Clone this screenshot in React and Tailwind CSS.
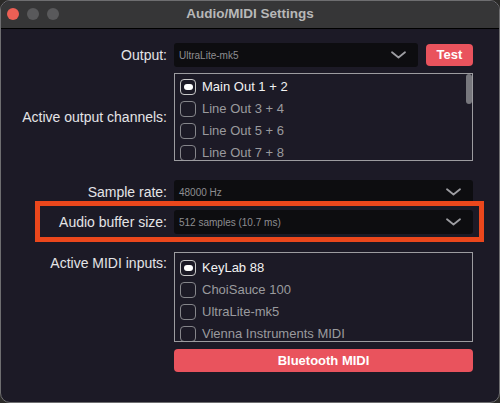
const outputs = ["Main Out 1 + 2", "Line Out 3 + 4", "Line Out 5 + 6", "Line Out 7 + 8"];
const midiInputs = ["KeyLab 88", "ChoiSauce 100", "UltraLite-mk5", "Vienna Instruments MIDI"];

function Check({ on }) {
  return (
    <div
      className={`w-4 h-4 shrink-0 rounded-[4px] border flex items-center justify-center ${
        on ? "border-[#c9c9c9]" : "border-[#85858a]"
      }`}
    >
      {on && <div className="w-[9px] h-[6px] rounded-full bg-white" />}
    </div>
  );
}

function Chevron() {
  return (
    <svg width="15" height="8" viewBox="0 0 15 8" fill="none" className="shrink-0">
      <path d="M1 1.2 L7.5 6.5 L14 1.2" stroke="#9d9da2" strokeWidth="1.8" strokeLinecap="round" strokeLinejoin="round" />
    </svg>
  );
}

function Combo({ value }) {
  return (
    <div className="h-6 flex-1 flex items-center justify-between pl-[5px] pr-[12px] rounded-[3px] bg-[#0d0d10]">
      <span className="text-[10px] text-[#8d8d90]">{value}</span>
      <Chevron />
    </div>
  );
}

function ItemList({ items, height, pt }) {
  return (
    <div className={`relative flex-1 border border-[#9c9ca0] overflow-hidden ${height} ${pt}`}>
      {items.map((item, i) => (
        <div key={item} className="flex items-center gap-[6px] pl-[5px] h-[22px]">
          <Check on={i === 0} />
          <span className={`text-[13px] ${i === 0 ? "text-[#f2f2f2]" : "text-[#9a9a9e]"}`}>{item}</span>
        </div>
      ))}
    </div>
  );
}

export default function App() {
  return (
    <div className="w-[500px] h-[403px] bg-[#2b2a28] overflow-hidden" style={{ fontFamily: '"Liberation Sans", Arial, sans-serif' }}>
      <div className="relative w-full h-full rounded-[10px] border border-[#6e6e70] bg-[#1c1a26] overflow-hidden flex flex-col">
        {/* title bar */}
        <div className="relative h-[28px] shrink-0 bg-[#363637] border-b border-black flex items-center justify-center">
          <div className="absolute left-[6px] top-[7px] flex gap-2">
            <div className="w-3 h-3 rounded-full bg-[#ec5f55]" />
            <div className="w-3 h-3 rounded-full bg-[#59595b]" />
            <div className="w-3 h-3 rounded-full bg-[#59595b]" />
          </div>
          <span className="text-[13.5px] font-bold text-[#b8b8b8]">Audio/MIDI Settings</span>
        </div>

        {/* body */}
        <div className="flex flex-col pt-[14px] pr-[26px] text-[14px] text-[#e4e4e6]">
          <div className="flex items-center gap-[7px]">
            <div className="w-[166px] text-right">Output:</div>
            <Combo value="UltraLite-mk5" />
            <button className="ml-[1px] w-[47px] h-[22px] rounded-[4px] bg-[#e9535d] text-white text-[13px] font-bold">
              Test
            </button>
          </div>

          <div className="flex items-center gap-[7px] mt-[6px]">
            <div className="w-[166px] text-right">Active output channels:</div>
            <div className="relative flex-1 flex">
              <ItemList items={outputs} height="h-[88px]" pt="pt-[2px]" />
              <div className="absolute right-[1px] top-[1px] w-[6px] h-[30px] rounded-full bg-[#77777d]" />
            </div>
          </div>

          <div className="flex items-center gap-[7px] mt-[19px]">
            <div className="w-[166px] text-right">Sample rate:</div>
            <Combo value="48000 Hz" />
          </div>

          <div className="flex items-center gap-[7px] mt-[6px]">
            <div className="w-[166px] text-right">Audio buffer size:</div>
            <Combo value="512 samples (10.7 ms)" />
          </div>

          <div className="flex items-start gap-[7px] mt-[18px]">
            <div className="w-[166px] text-right pt-[1px]">Active MIDI inputs:</div>
            <ItemList items={midiInputs} height="h-[90px]" pt="pt-[4px]" />
          </div>

          <div className="flex gap-[7px] mt-[7px]">
            <div className="w-[166px]" />
            <button className="flex-1 h-[23px] rounded-[4px] bg-[#e9535d] text-white text-[13px] font-bold">
              Bluetooth MIDI
            </button>
          </div>
        </div>

        {/* highlight annotation */}
        <div className="absolute left-[34px] top-[200px] w-[449px] h-[41px] border-[5px] border-[#eb471c]" />
      </div>
    </div>
  );
}
